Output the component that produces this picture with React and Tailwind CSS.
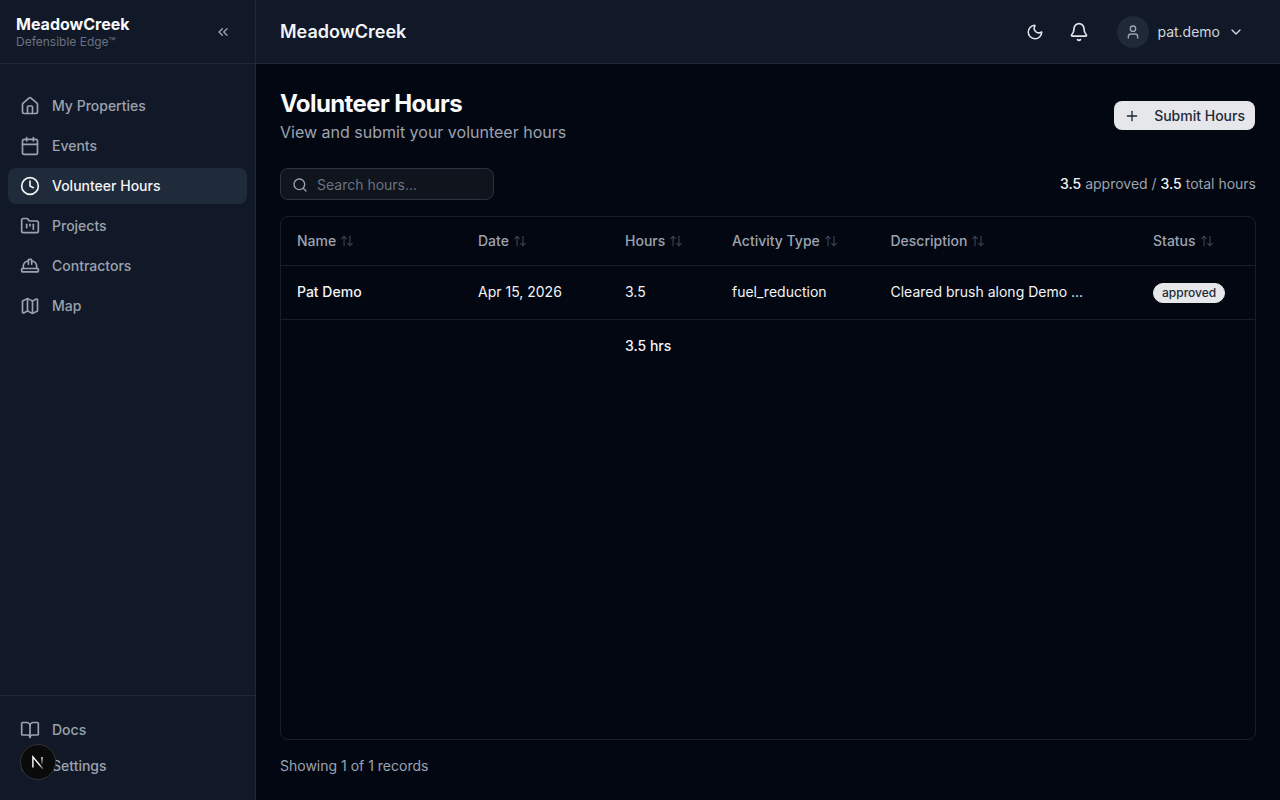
import React from "react";
import {
  ArrowUpDown,
  Bell,
  BookOpen,
  Calendar,
  ChevronDown,
  ChevronsLeft,
  Clock,
  FolderKanban,
  HardHat,
  House,
  Map as MapIcon,
  Moon,
  Plus,
  Search,
  Settings,
  User,
} from "lucide-react";

const navItems = [
  { label: "My Properties", icon: House },
  { label: "Events", icon: Calendar },
  { label: "Volunteer Hours", icon: Clock, active: true },
  { label: "Projects", icon: FolderKanban },
  { label: "Contractors", icon: HardHat },
  { label: "Map", icon: MapIcon },
];

const columns = [
  { label: "Name", width: "w-[181px]" },
  { label: "Date", width: "w-[147px]" },
  { label: "Hours", width: "w-[107px]" },
  { label: "Activity Type", width: "w-[158.5px]" },
  { label: "Description", width: "w-[262.5px]" },
  { label: "Status", width: "" },
];

function NavLink({ item }) {
  const Icon = item.icon;
  return (
    <a
      className={`flex h-9 items-center gap-3 rounded-lg px-3 text-sm font-medium ${
        item.active ? "bg-[#1f2a3a] text-[#f3f4f6]" : "text-[#9ca3af]"
      }`}
    >
      <Icon size={20} />
      {item.label}
    </a>
  );
}

export default function App() {
  return (
    <div className="flex h-screen overflow-hidden bg-[#030712] font-['Inter',sans-serif] text-white antialiased">
      <aside className="flex w-64 shrink-0 flex-col border-r border-[#1f2937] bg-[#111827]">
        <div className="flex h-16 items-center justify-between border-b border-[#1f2937] pl-4 pr-6">
          <div>
            <div className="text-base leading-5 font-bold text-[#f9fafb]">MeadowCreek</div>
            <div className="text-xs leading-4 text-[#6b7280]">Defensible Edge™</div>
          </div>
          <ChevronsLeft size={16} className="text-[#9ca3af]" />
        </div>
        <nav className="flex flex-1 flex-col gap-1 px-2 pt-6">
          {navItems.map((item) => (
            <NavLink key={item.label} item={item} />
          ))}
        </nav>
        <div className="flex h-[105px] flex-col border-t border-[#1f2937] px-2 pt-4">
          <NavLink item={{ label: "Docs", icon: BookOpen }} />
          <NavLink item={{ label: "Settings", icon: Settings }} />
        </div>
      </aside>

      <div className="flex min-w-0 flex-1 flex-col">
        <header className="flex h-16 shrink-0 items-center justify-between border-b border-[#1f2937] bg-[#111827] pl-6 pr-9">
          <h1 className="text-lg font-semibold text-[#f3f4f6]">MeadowCreek</h1>
          <div className="flex items-center">
            <Moon size={18} className="mr-[25px] text-[#e5e7eb]" />
            <Bell size={20} className="mr-[28px] text-[#e5e7eb]" />
            <div className="mr-2 flex h-8 w-8 items-center justify-center rounded-full bg-[#1f2937]">
              <User size={16} className="text-[#9ca3af]" />
            </div>
            <span className="text-sm text-[#d1d5db]">pat.demo</span>
            <ChevronDown size={16} className="ml-2 text-[#d1d5db]" />
          </div>
        </header>

        <main className="flex min-h-0 flex-1 flex-col px-6 pt-6 pb-6">
          <div className="flex items-start justify-between">
            <div>
              <h2 className="text-2xl leading-8 font-bold tracking-tight text-[#f9fafb]">Volunteer Hours</h2>
              <p className="text-base leading-6 text-[#9ca3af]">View and submit your volunteer hours</p>
            </div>
            <button className="mt-[13px] mr-[1px] flex h-[29px] items-center rounded-lg bg-[#e5e7eb] pr-[10px] pl-[10px] text-sm font-medium text-[#1f2937]">
              <Plus size={16} className="mr-[14px]" />
              Submit Hours
            </button>
          </div>

          <div className="mt-[24px] flex items-center justify-between">
            <div className="flex h-8 w-[214px] items-center rounded-lg border border-[#2b3240] bg-[#10141d] pt-[1px] pr-3 pl-[11px]">
              <Search size={16} className="mr-[9px] shrink-0 text-[#9ca3af]" />
              <span className="text-sm text-[#6b7280]">Search hours...</span>
            </div>
            <div className="text-sm text-[#9ca3af]">
              <span className="font-medium text-[#f3f4f6]">3.5</span> approved /{" "}
              <span className="font-medium text-[#f3f4f6]">3.5</span> total hours
            </div>
          </div>

          <div className="mt-4 min-h-0 flex-1 overflow-hidden rounded-lg border border-[#171e2b]">
            <table className="w-full table-fixed text-left text-sm">
              <thead>
                <tr className="h-[48px] border-b border-[#171e2b]">
                  {columns.map((col) => (
                    <th key={col.label} className={`${col.width} px-4 font-medium text-[#9ca3af]`}>
                      <span className="flex items-center gap-1">
                        {col.label}
                        <ArrowUpDown size={14} className="text-[#374151]" />
                      </span>
                    </th>
                  ))}
                </tr>
              </thead>
              <tbody>
                <tr className="h-[54px] border-b border-[#171e2b] text-[#f3f4f6]">
                  <td className="px-4 font-medium">Pat Demo</td>
                  <td className="px-4">Apr 15, 2026</td>
                  <td className="px-4">3.5</td>
                  <td className="px-4">fuel_reduction</td>
                  <td className="px-4">Cleared brush along Demo ...</td>
                  <td className="px-4">
                    <span className="inline-flex h-5 items-center rounded-full border border-[#e5e7eb] bg-[#e5e7eb] px-2 text-xs font-medium text-[#1f2937]">
                      approved
                    </span>
                  </td>
                </tr>
                <tr className="h-[53px] text-[#f3f4f6]">
                  <td className="px-4" />
                  <td className="px-4" />
                  <td className="px-4 font-medium">3.5 hrs</td>
                  <td className="px-4" />
                  <td className="px-4" />
                  <td className="px-4" />
                </tr>
              </tbody>
            </table>
          </div>

          <div className="mt-4 text-sm leading-5 text-[#9ca3af]">Showing 1 of 1 records</div>
        </main>
      </div>

      {/* dev tools badge sits on top of the sidebar */}
      <div className="fixed bottom-[20px] left-[20px] flex h-9 w-9 items-center justify-center rounded-full border border-[#333333] bg-[#0a0a0a]">
        <svg width="16" height="16" viewBox="0 0 16 16" fill="none">
          <defs>
            <linearGradient id="nDiag" x1="3" y1="3" x2="13" y2="15" gradientUnits="userSpaceOnUse">
              <stop offset="0.6" stopColor="#fff" />
              <stop offset="1" stopColor="#fff" stopOpacity="0.2" />
            </linearGradient>
            <linearGradient id="nStem" x1="12" y1="3" x2="12" y2="10" gradientUnits="userSpaceOnUse">
              <stop stopColor="#fff" />
              <stop offset="1" stopColor="#fff" stopOpacity="0.2" />
            </linearGradient>
          </defs>
          <path d="M2.9 13.5V2.9L13 15" stroke="url(#nDiag)" strokeWidth="1.4" />
          <path d="M12 2.9V10" stroke="url(#nStem)" strokeWidth="1.4" />
        </svg>
      </div>
    </div>
  );
}
